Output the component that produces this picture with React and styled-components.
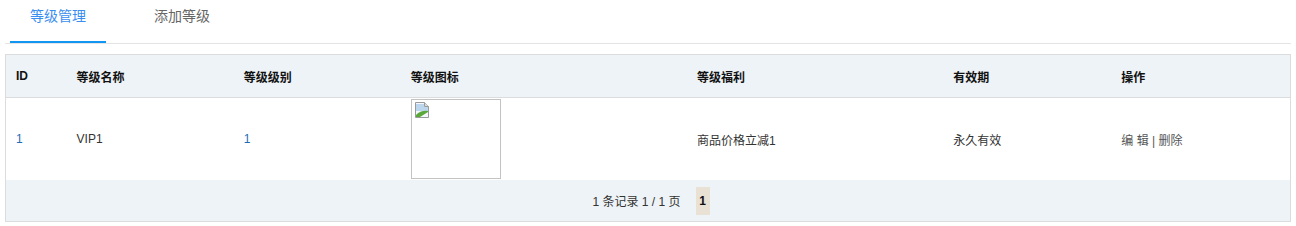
import React from 'react';
import styled, { createGlobalStyle } from 'styled-components';

const GlobalStyle = createGlobalStyle`
  body {
    margin: 0;
    background: #fff;
    font-family: "Liberation Sans", "Noto Sans CJK SC", sans-serif;
  }
`;

const Page = styled.div`
  padding: 0 5px;
`;

const Tabs = styled.div`
  display: flex;
  gap: 28px;
  height: 44px;
  box-sizing: border-box;
  padding-left: 5px;
  border-bottom: 1px solid #e4e4e4;
`;

const Tab = styled.div`
  height: 43px;
  box-sizing: border-box;
  padding: 0 20px;
  line-height: 32px;
  font-size: 14px;
  color: ${props => (props.active ? '#3a8ef0' : '#666')};
  border-bottom: 2px solid ${props => (props.active ? '#1296f3' : 'transparent')};
`;

const Table = styled.table`
  margin-top: 10px;
  width: 100%;
  border-collapse: collapse;
  border: 1px solid #dcdcdc;
  table-layout: fixed;
  font-size: 12px;
`;

const Th = styled.th`
  height: 42px;
  padding: 0 10px;
  text-align: left;
  font-weight: bold;
  color: #111;
  background: #eef3f7;
  border-bottom: 1px solid #dcdcdc;
`;

const Td = styled.td`
  height: 80px;
  padding: 1px 10px;
  color: ${props => props.color || '#333'};
`;

const Broken = styled.span`
  display: block;
  width: 90px;
  height: 80px;
  box-sizing: border-box;
  border: 1px solid #c3c3c3;
  padding: 2px;
`;

const Ops = styled.span`
  color: #555;
`;

const Footer = styled.td`
  height: 41px;
  padding: 0 0 0 6px;
  background: #eef3f7;
`;

const Pager = styled.div`
  display: flex;
  justify-content: center;
  align-items: center;
  gap: 15px;
  color: #333;
`;

const PageBtn = styled.span`
  display: inline-flex;
  align-items: center;
  justify-content: center;
  width: 14px;
  height: 28px;
  background: #e8e1d4;
  font-weight: bold;
  color: #111;
`;

const BrokenIcon = () => (
  <svg width="16" height="16" viewBox="0 0 16 16">
    <path d="M1.5 0.5 H10.5 L14.5 4.5 V15.5 H1.5 Z" fill="#f4f7fb" stroke="#9a9a9a" />
    <path d="M10.5 0.5 V4.5 H14.5" fill="#ddd" stroke="#9a9a9a" />
    <path d="M2 2 H10 V5 H14 V9 L2 9 Z" fill="#bcd6ee" />
    <path d="M2 15 L2 13 Q7 8 14 9 V10 L6 15 Z" fill="#5aa83a" />
  </svg>
);

const columns = [
  { title: 'ID', width: 61 },
  { title: '等级名称', width: 167 },
  { title: '等级级别', width: 167 },
  { title: '等级图标', width: 286 },
  { title: '等级福利', width: 256 },
  { title: '有效期', width: 168 },
  { title: '操作', width: 179 },
];

const App = () => (
  <Page>
    <GlobalStyle />
    <Tabs>
      <Tab active>等级管理</Tab>
      <Tab>添加等级</Tab>
    </Tabs>
    <Table>
      <colgroup>
        {columns.map(c => <col key={c.title} style={{ width: c.width }} />)}
      </colgroup>
      <thead>
        <tr>
          {columns.map(c => <Th key={c.title}>{c.title}</Th>)}
        </tr>
      </thead>
      <tbody>
        <tr>
          <Td color="#1e6db4">1</Td>
          <Td>VIP1</Td>
          <Td color="#1e6db4">1</Td>
          <Td>
            <Broken><BrokenIcon /></Broken>
          </Td>
          <Td>商品价格立减1</Td>
          <Td>永久有效</Td>
          <Td><Ops>编 辑 | 删除</Ops></Td>
        </tr>
        <tr>
          <Footer colSpan={7}>
            <Pager>
              <span>1 条记录 1 / 1 页</span>
              <PageBtn>1</PageBtn>
            </Pager>
          </Footer>
        </tr>
      </tbody>
    </Table>
  </Page>
);

export default App;
